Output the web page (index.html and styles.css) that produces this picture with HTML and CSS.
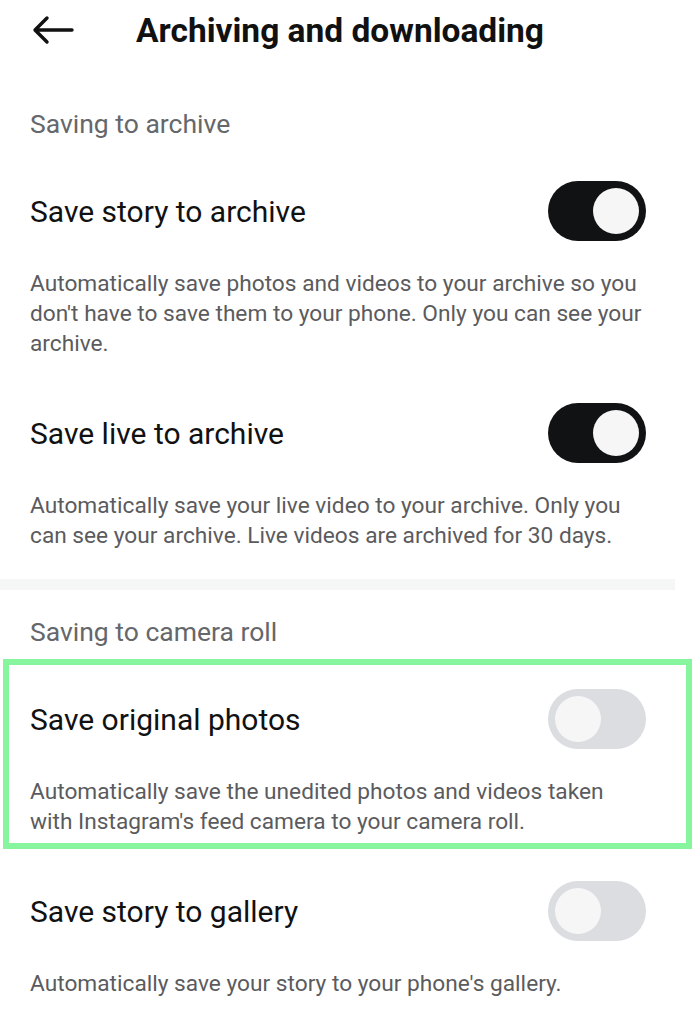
FILE: index.html
```html
<!DOCTYPE html>
<html lang="en">
<head>
    <meta charset="UTF-8">
    <title>Archiving and downloading</title>
    <link rel="stylesheet" href="styles.css">
</head>
<body>

    <!-- Cabecalho -->
    <div class="topo">
        <svg class="voltar" width="42" height="30" viewBox="0 0 42 30">
            <path d="M40 15 H4 M15 3 L3 15 L15 27" fill="none" stroke="#111" stroke-width="3.4" stroke-linecap="round" stroke-linejoin="round"/>
        </svg>
        <h1>Archiving and downloading</h1>
    </div>

    <h2 class="secao">Saving to archive</h2>

    <div class="linha">
        <span class="nome">Save story to archive</span>
        <div class="chave ligada"><div class="bola"></div></div>
    </div>
    <p class="descricao">Automatically save photos and videos to your archive so you don't have to save them to your phone. Only you can see your archive.</p>

    <div class="linha segunda">
        <span class="nome">Save live to archive</span>
        <div class="chave ligada"><div class="bola"></div></div>
    </div>
    <p class="descricao">Automatically save your live video to your archive. Only you can see your archive. Live videos are archived for 30 days.</p>

    <div class="divisor"></div>

    <h2 class="secao rolo">Saving to camera roll</h2>

    <div class="destaque">
        <div class="linha">
            <span class="nome">Save original photos</span>
            <div class="chave"><div class="bola"></div></div>
        </div>
        <p class="descricao">Automatically save the unedited photos and videos taken with Instagram's feed camera to your camera roll.</p>
    </div>

    <div class="linha galeria">
        <span class="nome">Save story to gallery</span>
        <div class="chave"><div class="bola"></div></div>
    </div>
    <p class="descricao">Automatically save your story to your phone's gallery.</p>

</body>
</html>
```

FILE: styles.css
```css
body {
    margin: 0;
    font-family: Roboto, "Liberation Sans", sans-serif;
    background-color: #ffffff;
    color: #111111;
    width: 693px;
}

.topo {
    height: 60px;
    display: flex;
    align-items: center;
    padding-left: 32px;
}

.voltar {
    flex-shrink: 0;
}

h1 {
    margin: 0 0 0 62px;
    font-size: 33.5px;
    font-weight: 700;
    letter-spacing: 0;
    color: #111111;
}

.secao {
    margin: 49px 0 0 30px;
    font-size: 26.5px;
    line-height: 30px;
    font-weight: 400;
    color: #65676b;
}

.rolo {
    margin-top: 27px;
}

.linha {
    display: flex;
    align-items: center;
    justify-content: space-between;
    height: 60px;
    margin: 42px 47px 0 30px;
}

.segunda {
    margin-top: 44px;
}

.galeria {
    margin-top: 32px;
}

.nome {
    font-size: 30px;
    color: #111111;
}

.chave {
    width: 98px;
    height: 60px;
    border-radius: 30px;
    background-color: #dcdde1;
    display: flex;
    align-items: center;
    padding: 0 7px;
    box-sizing: border-box;
}

.bola {
    width: 46px;
    height: 46px;
    border-radius: 50%;
    background-color: #f6f6f7;
}

.ligada {
    background-color: #111214;
    justify-content: flex-end;
}

.descricao {
    margin: 28px 40px 0 30px;
    font-size: 22.7px;
    line-height: 30px;
    color: #5b5b5e;
}

.divisor {
    margin-top: 28px;
    width: 675px;
    height: 11px;
    background-color: #f5f6f6;
}

.destaque {
    margin: 12px 1px 0 3px;
    border: 6px solid #86f59d;
    padding: 24px 0 6px 0;
}

.destaque .linha {
    margin: 0 40px 0 21px;
}

.destaque .descricao {
    margin: 28px 40px 0 21px;
}
```
